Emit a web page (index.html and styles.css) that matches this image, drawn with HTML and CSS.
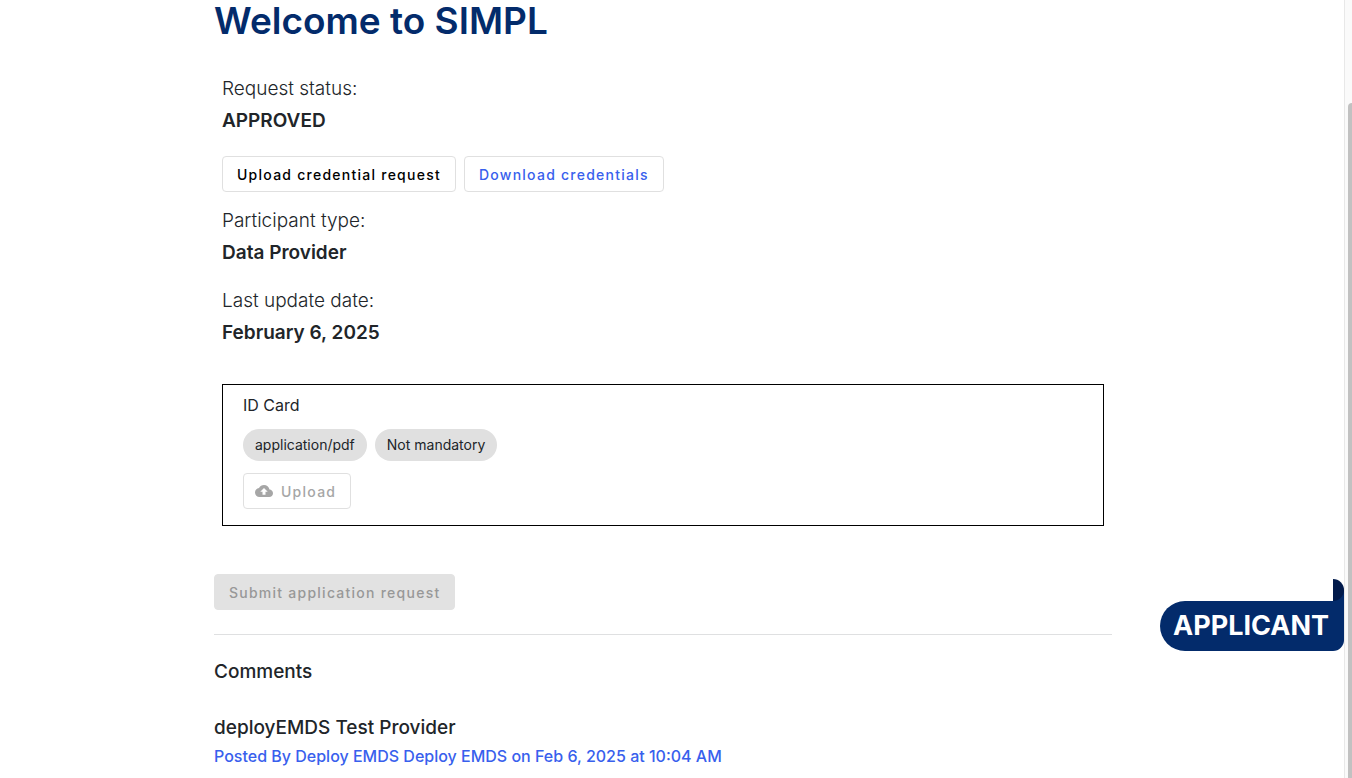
FILE: index.html
```html
<!DOCTYPE html>
<html lang="en">
<head>
<meta charset="utf-8">
<title>Welcome to SIMPL</title>
<link rel="stylesheet" href="styles.css">
</head>
<body>
<div class="shell">
  <main class="page">
    <div class="content">
      <h1 class="title">Welcome to SIMPL</h1>
      <section class="details">
        <dl class="field">
          <dt>Request status:</dt>
          <dd>APPROVED</dd>
        </dl>
        <div class="actions">
          <button class="btn" type="button">Upload credential request</button>
          <button class="btn btn-link" type="button">Download credentials</button>
        </div>
        <dl class="field">
          <dt>Participant type:</dt>
          <dd>Data Provider</dd>
        </dl>
        <dl class="field">
          <dt>Last update date:</dt>
          <dd>February 6, 2025</dd>
        </dl>
        <div class="document">
          <p class="document-name">ID Card</p>
          <div class="chips">
            <span class="chip">application/pdf</span>
            <span class="chip">Not mandatory</span>
          </div>
          <button class="btn btn-upload" type="button" disabled>
            <svg class="icon" viewBox="0 0 24 24" aria-hidden="true"><path d="M19.35 10.04C18.67 6.59 15.64 4 12 4 9.11 4 6.6 5.64 5.35 8.04 2.34 8.36 0 10.91 0 14c0 3.31 2.69 6 6 6h13c2.76 0 5-2.24 5-5 0-2.64-2.05-4.78-4.65-4.96zM14 13v4h-4v-4H7l5-5 5 5h-3z"/></svg>
            Upload
          </button>
        </div>
      </section>
      <button class="btn btn-submit" type="button" disabled>Submit application request</button>
      <section class="comments">
        <h2 class="comments-title">Comments</h2>
        <article>
          <h3 class="comment-subject">deployEMDS Test Provider</h3>
          <p class="comment-meta">Posted By Deploy EMDS Deploy EMDS on Feb 6, 2025 at 10:04 AM</p>
        </article>
      </section>
    </div>
    <div class="ribbon">APPLICANT</div>
  </main>
  <div class="scroll-track" aria-hidden="true"><div class="scroll-thumb"></div></div>
</div>
</body>
</html>
```
FILE: styles.css
```css
* { box-sizing: border-box; }

body {
  margin: 0;
  background: #fff;
  color: #212529;
  font: 400 16px/24px Inter, "Liberation Sans", sans-serif;
}

h1, h2, h3, p, dl, dd { margin: 0; }

.shell {
  display: flex;
  height: 100vh;
  overflow: hidden;
}

.page {
  position: relative;
  flex: 1;
  padding: 0 32px 0 14px;
}

.content {
  max-width: 898px;
  margin: 0 auto;
}

.title {
  color: #032b6b;
  font-size: 37px;
  font-weight: 600;
  line-height: 42px;
}

.details { padding: 31px 8px 0; }

.field {
  font-size: 19px;
  line-height: 32px;
  margin-bottom: 16px;
}

.field dt { font-weight: 300; }
.field dd { font-weight: 600; }

.actions {
  display: flex;
  gap: 8px;
  margin: 19px 0 13px;
}

.btn {
  height: 36px;
  padding: 2px 14px 0;
  border: 1px solid #e0e0e0;
  border-radius: 4px;
  background: #fff;
  color: #000;
  font: 500 14px/20px Inter, "Liberation Sans", sans-serif;
  letter-spacing: 1.25px;
}

.btn-link { color: #3860ed; }

.document {
  margin-top: 35px;
  padding: 8px 20px 16px;
  border: 1px solid #000;
}

.chips {
  display: flex;
  gap: 8px;
  margin: 12px 0;
}

.chip {
  padding: 6px 12px;
  border-radius: 16px;
  background: #e0e0e0;
  font-size: 14px;
  line-height: 20px;
}

.btn-upload {
  display: flex;
  align-items: center;
  gap: 8px;
  padding: 2px 14px 0 11px;
  color: #a6a6a6;
}

.icon {
  width: 18px;
  height: 18px;
  margin-bottom: 2px;
  fill: currentColor;
}

.btn-submit {
  display: block;
  margin-top: 48px;
  border-color: #e2e2e2;
  background: #e2e2e2;
  color: #989898;
}

.comments {
  margin-top: 24px;
  padding-top: 21px;
  border-top: 1px solid #dfe0e1;
}

.comments-title {
  margin-bottom: 24px;
  font-size: 19px;
  font-weight: 500;
  line-height: 32px;
}

.comment-subject {
  font-size: 19px;
  font-weight: 500;
  line-height: 32px;
}

.comment-meta {
  color: #3860ed;
  font-weight: 500;
}

.ribbon {
  position: absolute;
  right: 0;
  bottom: 127px;
  padding: 0 15px 0 13px;
  border-radius: 25px 0 11px 25px;
  background: #032b6b;
  color: #fff;
  font-size: 27px;
  font-weight: 700;
  line-height: 50px;
}

.ribbon::before,
.ribbon::after {
  content: "";
  position: absolute;
  right: 0;
  bottom: 100%;
  width: 11px;
}

.ribbon::before {
  height: 11px;
  background: #032b6b;
}

.ribbon::after {
  height: 22px;
  border-radius: 0 11px 11px 0;
  background: #011a4b;
}

.scroll-track {
  width: 8px;
  padding: 103px 0 0 3px;
  border-left: 1px solid #e8e8e8;
  background: #fafafa;
}

.scroll-thumb {
  height: 100%;
  border-radius: 4px 0 0 0;
  background: #c1c1c1;
}
```
